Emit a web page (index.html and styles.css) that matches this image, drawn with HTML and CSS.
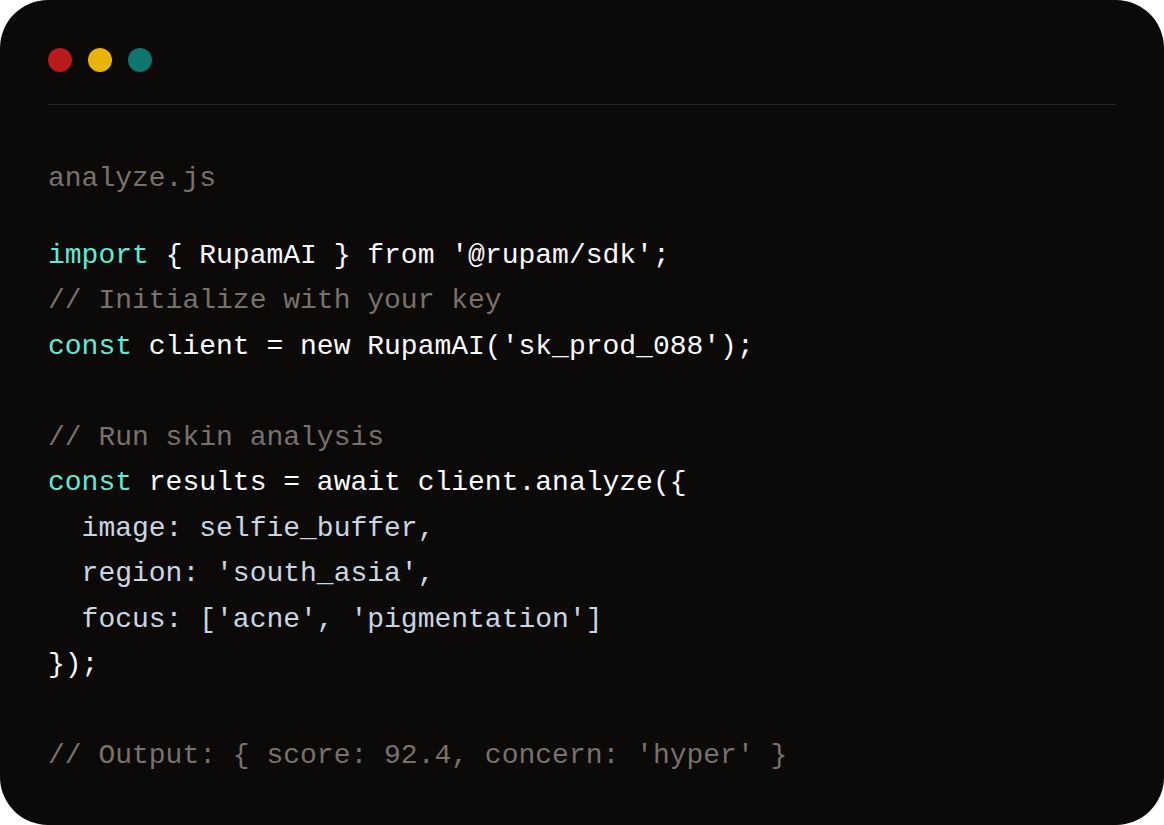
FILE: index.html
```html
<!DOCTYPE html>
<html lang="en">
<head>
<meta charset="utf-8">
<title>analyze.js</title>
<link rel="stylesheet" href="styles.css">
</head>
<body>
<div class="card">
  <div class="titlebar">
    <span class="dot red"></span>
    <span class="dot yellow"></span>
    <span class="dot teal"></span>
  </div>
  <div class="filename">analyze.js</div>
<pre class="code"><span class="kw">import</span> { RupamAI } from '@rupam/sdk';
<span class="cm">// Initialize with your key</span>
<span class="kw">const</span> client = new RupamAI('sk_prod_088');

<span class="cm">// Run skin analysis</span>
<span class="kw">const</span> results = await client.analyze({
<span class="prop">  image: selfie_buffer,</span>
<span class="prop">  region: 'south_asia',</span>
<span class="prop">  focus: ['acne', 'pigmentation']</span>
});

<span class="cm">// Output: { score: 92.4, concern: 'hyper' }</span></pre>
</div>
</body>
</html>
```
FILE: styles.css
```css
html, body {
  margin: 0;
  padding: 0;
  background: #ffffff;
}
.card {
  box-sizing: border-box;
  width: 1164px;
  height: 825px;
  background: #0b0a09;
  border-radius: 48px;
  padding: 48px;
  font-family: "Liberation Mono", "DejaVu Sans Mono", monospace;
  font-size: 28px;
  color: #fafafa;
  overflow: hidden;
}
.titlebar {
  display: flex;
  gap: 16px;
  padding-bottom: 32px;
  border-bottom: 1px solid #2a2a2a;
}
.dot {
  width: 24px;
  height: 24px;
  border-radius: 50%;
  display: block;
}
.red { background: #b91c1c; }
.yellow { background: #eab308; }
.teal { background: #0f766e; }
.filename {
  padding-top: 51px;
  line-height: 45.5px;
  color: #78716c;
}
.code {
  margin: 31px 0 0;
  font: inherit;
  line-height: 45.5px;
  white-space: pre;
  color: #fafafa;
}
.kw { color: #5eead4; }
.cm { color: #78716c; }
.prop { color: #cbd5e1; }
```
